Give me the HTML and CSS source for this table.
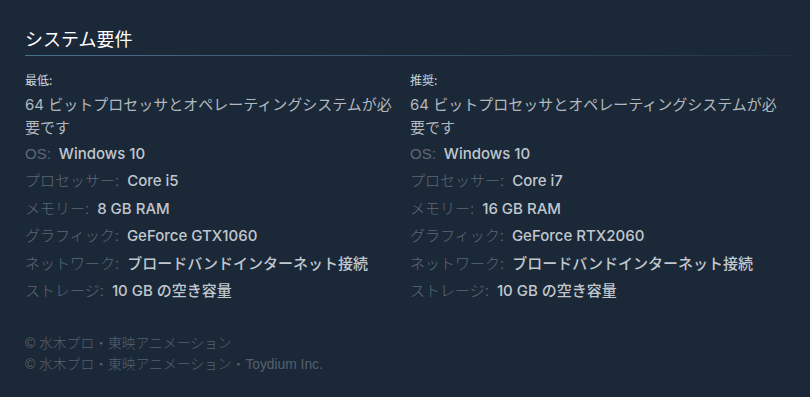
FILE: index.html
```html
<!DOCTYPE html>
<html lang="ja">
<head>
<meta charset="utf-8">
<title>システム要件</title>
<link rel="stylesheet" href="styles.css">
</head>
<body>
<div class="sysreq">
  <h2 class="sysreq-title">システム要件</h2>
  <div class="sysreq-cols">
    <div class="sysreq-col">
      <div class="tier">最低:</div>
      <ul class="req-list">
        <li class="req-desc">64 ビットプロセッサとオペレーティングシステムが必要です</li>
        <li class="req-row"><span class="req-label">OS:</span><span class="req-value">Windows 10</span></li>
        <li class="req-row"><span class="req-label">プロセッサー:</span><span class="req-value">Core i5</span></li>
        <li class="req-row"><span class="req-label">メモリー:</span><span class="req-value">8 GB RAM</span></li>
        <li class="req-row"><span class="req-label">グラフィック:</span><span class="req-value">GeForce GTX1060</span></li>
        <li class="req-row"><span class="req-label">ネットワーク:</span><span class="req-value">ブロードバンドインターネット接続</span></li>
        <li class="req-row"><span class="req-label">ストレージ:</span><span class="req-value">10 GB の空き容量</span></li>
      </ul>
    </div>
    <div class="sysreq-col">
      <div class="tier">推奨:</div>
      <ul class="req-list">
        <li class="req-desc">64 ビットプロセッサとオペレーティングシステムが必要です</li>
        <li class="req-row"><span class="req-label">OS:</span><span class="req-value">Windows 10</span></li>
        <li class="req-row"><span class="req-label">プロセッサー:</span><span class="req-value">Core i7</span></li>
        <li class="req-row"><span class="req-label">メモリー:</span><span class="req-value">16 GB RAM</span></li>
        <li class="req-row"><span class="req-label">グラフィック:</span><span class="req-value">GeForce RTX2060</span></li>
        <li class="req-row"><span class="req-label">ネットワーク:</span><span class="req-value">ブロードバンドインターネット接続</span></li>
        <li class="req-row"><span class="req-label">ストレージ:</span><span class="req-value">10 GB の空き容量</span></li>
      </ul>
    </div>
  </div>
  <div class="legal">
    <p>© 水木プロ・東映アニメーション</p>
    <p>© 水木プロ・東映アニメーション・Toydium Inc.</p>
  </div>
</div>
</body>
</html>
```
FILE: styles.css
```css
html, body {
  margin: 0;
  padding: 0;
  background: #1b2838;
}

body {
  font-family: "Inter", "Noto Sans CJK JP", sans-serif;
  color: #acb2b8;
}

.sysreq {
  width: 770px;
  padding: 26px 0 0 25px;
}

.sysreq-title {
  margin: 0;
  font-family: "Noto Sans CJK JP", sans-serif;
  font-size: 18px;
  font-weight: 400;
  line-height: 24px;
  color: #ffffff;
  padding-bottom: 5px;
  border-bottom: 1px solid #3f6580;
  border-image: linear-gradient(to right, #47708d 0%, #3a5a72 40%, #2b4256 80%, #1f2f40 100%) 1;
}

.sysreq-cols {
  display: grid;
  grid-template-columns: 370px 370px;
  column-gap: 15px;
  margin-top: 16px;
}

.tier {
  font-family: "Noto Sans CJK JP", sans-serif;
  font-size: 12px;
  line-height: 16px;
  color: #c6d4df;
}

.req-list {
  list-style: none;
  margin: 5px 0 0;
  padding: 0;
  font-size: 15px;
}

.req-desc {
  line-height: 23px;
  margin-bottom: 3px;
  color: #b1b8bf;
}

.req-row {
  display: flex;
  align-items: baseline;
  gap: 8px;
  height: 23px;
  line-height: 23px;
  margin-bottom: 4.4px;
  white-space: nowrap;
}

.req-label {
  font-family: "Liberation Sans", "Noto Sans CJK JP", sans-serif;
  font-weight: 300;
  color: #5e6975;
}

.req-value {
  font-weight: 500;
  color: #c0c7ce;
}

.legal {
  margin-top: 27px;
  font-family: "Liberation Sans", "Noto Sans CJK JP", sans-serif;
  font-size: 13.8px;
  font-weight: 300;
  line-height: 21px;
  color: #56616c;
}

.legal p {
  margin: 0;
}
```
